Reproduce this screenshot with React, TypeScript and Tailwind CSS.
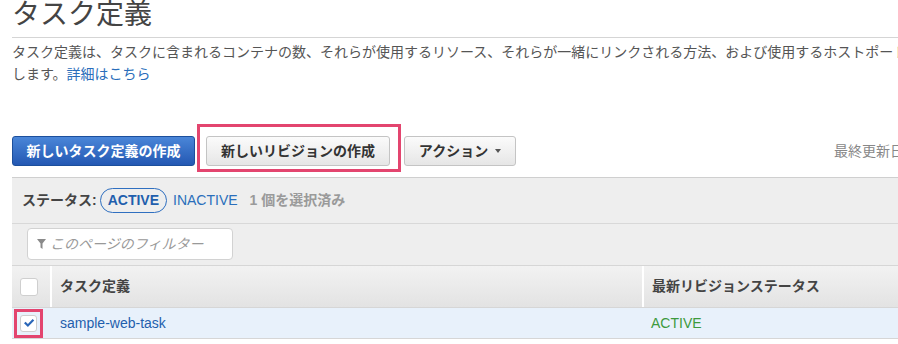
const font = {
  fontFamily: '"Liberation Sans", "Noto Sans CJK JP", sans-serif',
};

const Funnel = () => (
  <svg width="9" height="10" viewBox="0 0 9 10" className="fill-[#8a8a8a]">
    <path d="M0 0h9L5.5 4.5V10L3.5 8.5V4.5z" />
  </svg>
);

const Check = () => (
  <svg width="12" height="10" viewBox="0 0 12 10" className="fill-[#2a66b8]">
    <path d="M1 5.2l1.6-1.5 2.3 2.2L9.6 1 11.2 2.5 4.9 9z" />
  </svg>
);

export default function App() {
  return (
    <div className="w-[898px] h-[344px] overflow-hidden bg-white" style={font}>
      <div className="relative w-[1100px] pl-[12px]">
        {/* heading */}
        <div className="border-b border-[#d5d5d5] h-[39px]">
          <h1 className="text-[28px] leading-[32px] -mt-[1px] text-[#444] font-normal">
            タスク定義
          </h1>
        </div>
        <p className="mt-[3px] text-[14px] leading-[22px] text-[#555] whitespace-nowrap">
          タスク定義は、タスクに含まれるコンテナの数、それらが使用するリソース、それらが一緒にリンクされる方法、および使用するホストポートを指定
          <br />
          します。<span className="text-[#2a6ebb]">詳細はこちら</span>
        </p>

        {/* buttons */}
        <div className="mt-[51px] flex items-center h-[30px]">
          <button className="shrink-0 h-[30px] w-[183px] rounded-[3px] border border-[#1c4f9c] bg-gradient-to-b from-[#4a86d8] to-[#2458b3] text-white text-[14px] font-bold">
            新しいタスク定義の作成
          </button>
          <button className="shrink-0 ml-[11px] h-[30px] w-[184px] rounded-[3px] border border-[#c4c4c4] bg-gradient-to-b from-[#fbfbfb] to-[#e6e6e6] text-[#333] text-[14px] font-bold">
            新しいリビジョンの作成
          </button>
          <button className="shrink-0 ml-[14px] h-[30px] w-[112px] rounded-[3px] border border-[#c4c4c4] bg-gradient-to-b from-[#fbfbfb] to-[#e6e6e6] text-[#333] text-[14px] font-bold flex items-center justify-center gap-[7px]">
            アクション
            <span className="inline-block w-0 h-0 border-l-[3.5px] border-r-[3.5px] border-t-[4px] border-l-transparent border-r-transparent border-t-[#555]" />
          </button>
          <span className="shrink-0 ml-[318px] text-[14px] text-[#888] whitespace-nowrap">
            最終更新日時
          </span>
        </div>

        {/* panel */}
        <div className="mt-[11px] w-[1000px] border-t border-[#cfcfcf] bg-[#eeeeee]">
          <div className="h-[45px] flex items-center pl-[10px] text-[14px]">
            <span className="font-bold text-[#444]">ステータス:</span>
            <span className="ml-[3px] h-[25px] px-[7px] rounded-full border border-[#2f6fc0] text-[#1f5fad] font-bold flex items-center">
              ACTIVE
            </span>
            <span className="ml-[6px] text-[#2a6ebb]">INACTIVE</span>
            <span className="ml-[12px] text-[#9a9a9a] font-bold">1 個を選択済み</span>
          </div>
          <div className="h-[42px] border-t border-[#d8d8d8] pl-[15px] pt-[4px]">
            <div className="w-[206px] h-[32px] bg-white border border-[#d2d2d2] rounded-[4px] flex items-center pl-[9px] gap-[4px]">
              <Funnel />
              <span className="italic text-[14px] text-[#999]">このページのフィルター</span>
            </div>
          </div>
          <div className="h-[42px] border-t border-[#d6d6d6] flex bg-gradient-to-b from-[#f2f2f2] to-[#e3e3e3] text-[14px] font-bold text-[#444]">
            <div className="w-[40px] flex items-center pl-[8px] border-r-2 border-white">
              <span className="w-[18px] h-[18px] bg-white border border-[#cfcfcf] rounded-[3px]" />
            </div>
            <div className="w-[592px] flex items-center pl-[8px] border-r-2 border-white">タスク定義</div>
            <div className="flex items-center pl-[8px]">最新リビジョンステータス</div>
          </div>
          <div className="h-[32px] border-t border-[#d6d6d6] border-b flex bg-[#e8f1fb] text-[14px]">
            <div className="w-[40px] flex items-center pl-[8px]">
              <span className="w-[17px] h-[17px] bg-white border border-[#cfcfcf] rounded-[3px] flex items-center justify-center">
                <Check />
              </span>
            </div>
            <div className="w-[592px] flex items-center pl-[8px] text-[#1f5fad]">sample-web-task</div>
            <div className="flex items-center pl-[7px] text-[#3d9a3d]">ACTIVE</div>
          </div>
        </div>

        {/* annotation highlights */}
        <div className="absolute left-[197px] top-[125px] w-[204px] h-[48px] border-[3px] border-[#e3456f]" />
        <div className="absolute left-[14px] top-[310px] w-[29px] h-[29px] border-[3px] border-[#e3456f]" />
      </div>
    </div>
  );
}
